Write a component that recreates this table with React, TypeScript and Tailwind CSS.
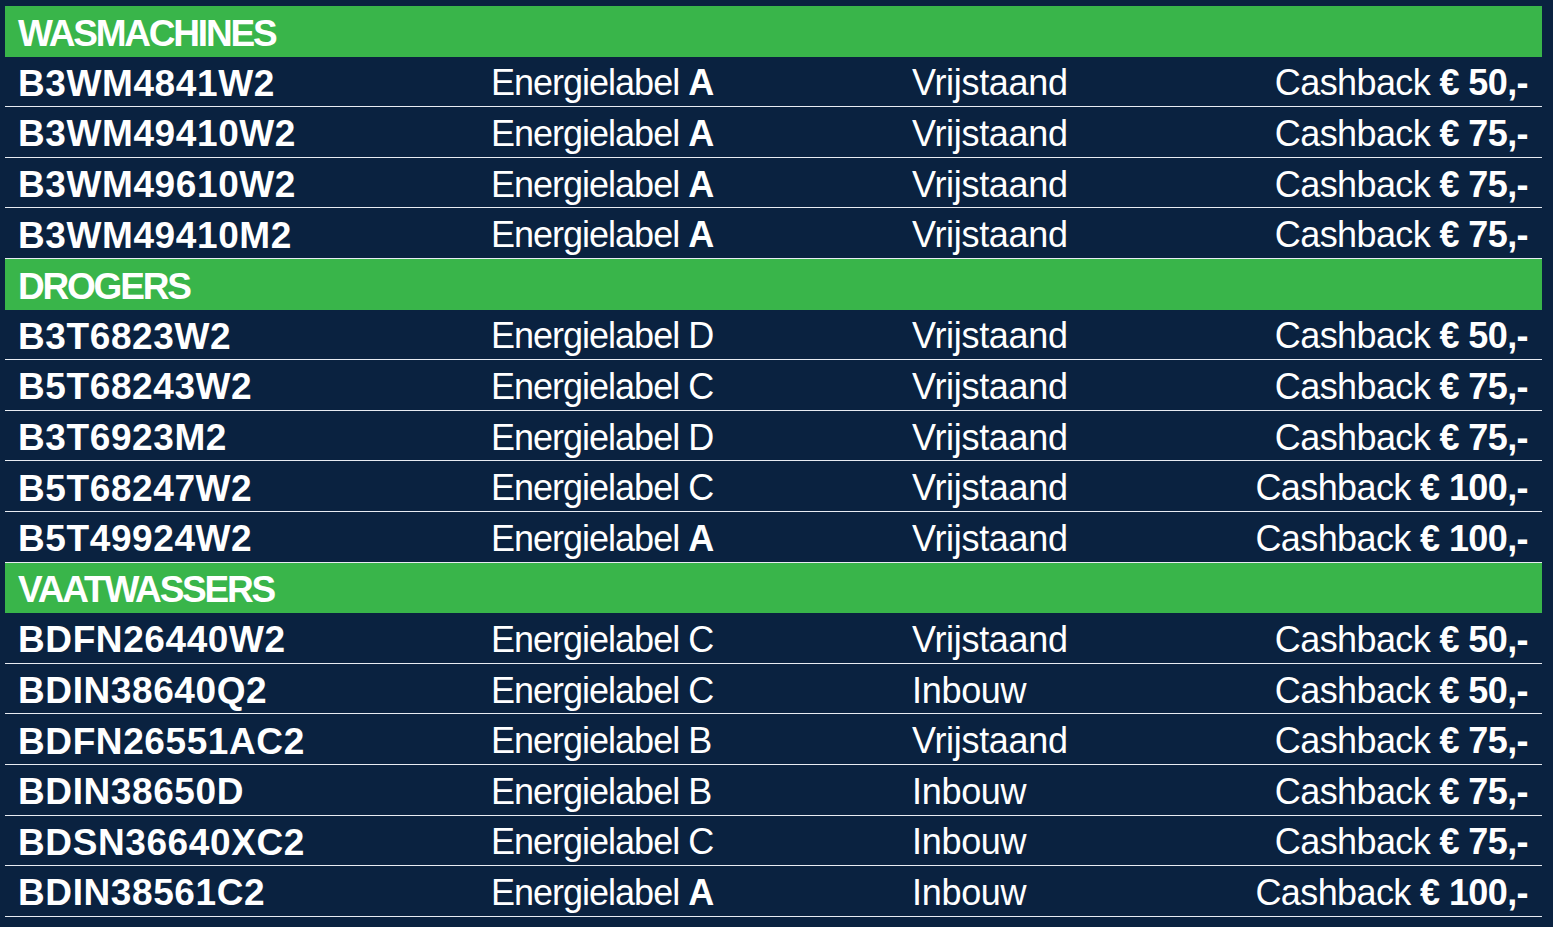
import React from "react";

type Row = { model: string; label: string; bold: boolean; type: string; cash: string };
type Section = { title: string; rows: Row[] };

const sections: Section[] = [
  {
    title: "WASMACHINES",
    rows: [
      { model: "B3WM4841W2", label: "A", bold: true, type: "Vrijstaand", cash: "50" },
      { model: "B3WM49410W2", label: "A", bold: true, type: "Vrijstaand", cash: "75" },
      { model: "B3WM49610W2", label: "A", bold: true, type: "Vrijstaand", cash: "75" },
      { model: "B3WM49410M2", label: "A", bold: true, type: "Vrijstaand", cash: "75" },
    ],
  },
  {
    title: "DROGERS",
    rows: [
      { model: "B3T6823W2", label: "D", bold: false, type: "Vrijstaand", cash: "50" },
      { model: "B5T68243W2", label: "C", bold: false, type: "Vrijstaand", cash: "75" },
      { model: "B3T6923M2", label: "D", bold: false, type: "Vrijstaand", cash: "75" },
      { model: "B5T68247W2", label: "C", bold: false, type: "Vrijstaand", cash: "100" },
      { model: "B5T49924W2", label: "A", bold: true, type: "Vrijstaand", cash: "100" },
    ],
  },
  {
    title: "VAATWASSERS",
    rows: [
      { model: "BDFN26440W2", label: "C", bold: false, type: "Vrijstaand", cash: "50" },
      { model: "BDIN38640Q2", label: "C", bold: false, type: "Inbouw", cash: "50" },
      { model: "BDFN26551AC2", label: "B", bold: false, type: "Vrijstaand", cash: "75" },
      { model: "BDIN38650D", label: "B", bold: false, type: "Inbouw", cash: "75" },
      { model: "BDSN36640XC2", label: "C", bold: false, type: "Inbouw", cash: "75" },
      { model: "BDIN38561C2", label: "A", bold: true, type: "Inbouw", cash: "100" },
    ],
  },
];

export default function App() {
  return (
    <div
      className="w-[1553px] h-[927px] bg-[#0a2240] pt-[6px] pl-[5px] pr-[11px] text-white overflow-hidden"
      style={{ fontFamily: '"Liberation Sans", Arial, sans-serif' }}
    >
      {sections.map((s) => (
        <div key={s.title}>
          <div className="h-[50.6px] bg-[#39b54a] flex items-center pl-[13px] pt-[4px]">
            <span className="text-[37px] font-bold tracking-[-2.2px] leading-none">{s.title}</span>
          </div>
          {s.rows.map((r) => (
            <div
              key={r.model}
              className="h-[50.6px] border-b border-[#e8ecf2] grid grid-cols-[473px_421px_1fr] items-center pl-[13px] pr-[14px] pt-[4px]"
            >
              <span className="text-[37px] font-bold tracking-[0.6px] leading-none">{r.model}</span>
              <span className="text-[36px] tracking-[-1px] leading-none">
                Energielabel{" "}
                {r.bold ? <b className="font-bold">{r.label}</b> : r.label}
              </span>
              <div className="flex justify-between items-center">
                <span className="text-[36px] tracking-[-0.3px] leading-none">{r.type}</span>
                <span className="text-[36px] tracking-[-0.6px] leading-none">
                  Cashback <b className="font-bold">€ {r.cash},-</b>
                </span>
              </div>
            </div>
          ))}
        </div>
      ))}
    </div>
  );
}
